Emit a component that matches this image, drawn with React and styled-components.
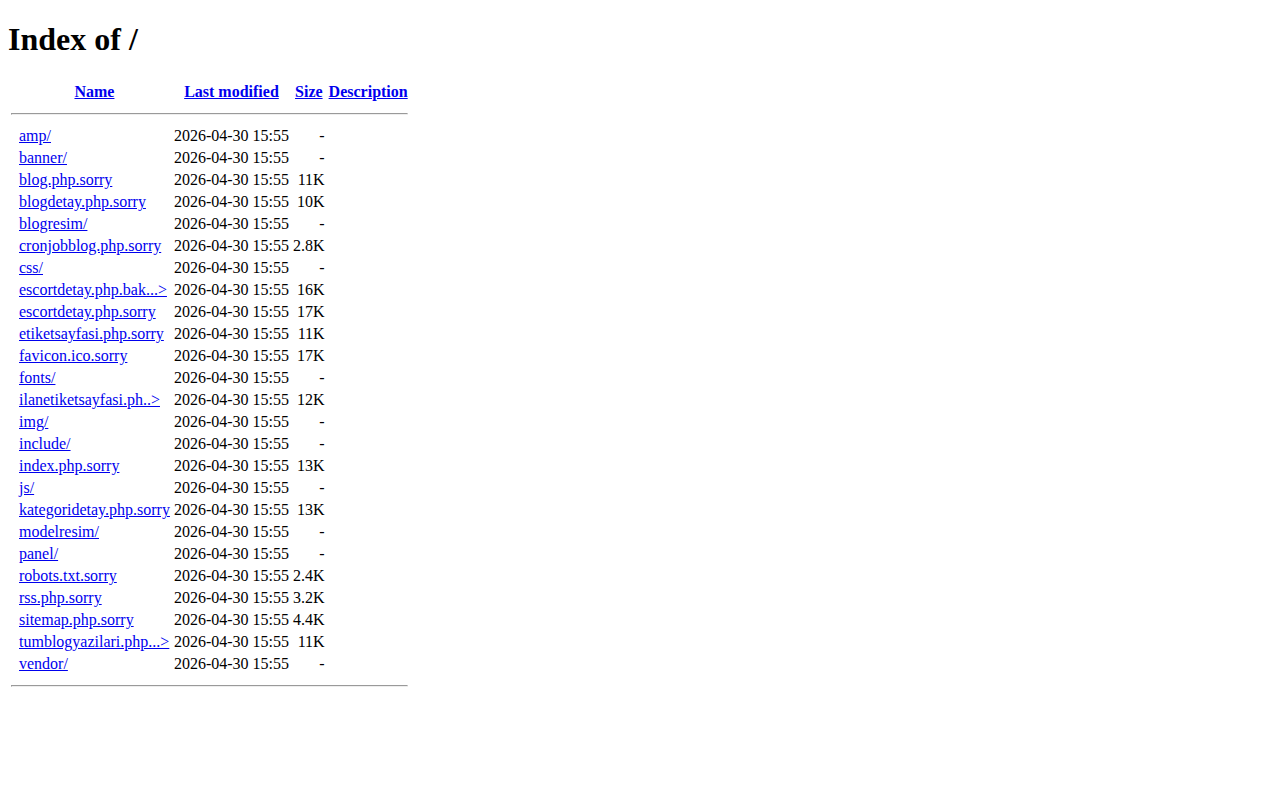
import React from "react";
import styled, { createGlobalStyle } from "styled-components";

const GlobalStyle = createGlobalStyle`
  body {
    margin: 0 8px 8px;
    background: #ffffff;
    color: #000000;
    font-family: "Liberation Serif", "Times New Roman", serif;
    font-size: 16px;
  }
`;

const Title = styled.h1`
  font-size: 2em;
  font-weight: bold;
  margin: 0.67em 0;
`;

const Listing = styled.table`
  border-collapse: separate;
  border-spacing: 2px;
`;

const HeadCell = styled.th`
  padding: 1px;
  font-weight: bold;
  text-align: center;
  vertical-align: ${(p) => (p.$top ? "top" : "middle")};
`;

const Cell = styled.td`
  padding: 1px;
  text-align: ${(p) => (p.$right ? "right" : "left")};
  vertical-align: ${(p) => (p.$top ? "top" : "middle")};
  white-space: nowrap;
`;

const FileLink = styled.a`
  color: #0000ee;
  text-decoration: underline;
  cursor: pointer;
`;

const Rule = styled.hr`
  margin: 8px 0;
  color: gray;
  border-style: inset;
  border-width: 1px;
  overflow: hidden;
`;

const DATE = "2026-04-30 15:55";

const files = [
  { name: "amp/", size: "-" },
  { name: "banner/", size: "-" },
  { name: "blog.php.sorry", size: "11K" },
  { name: "blogdetay.php.sorry", size: "10K" },
  { name: "blogresim/", size: "-" },
  { name: "cronjobblog.php.sorry", size: "2.8K" },
  { name: "css/", size: "-" },
  { name: "escortdetay.php.bak...>", size: "16K" },
  { name: "escortdetay.php.sorry", size: "17K" },
  { name: "etiketsayfasi.php.sorry", size: "11K" },
  { name: "favicon.ico.sorry", size: "17K" },
  { name: "fonts/", size: "-" },
  { name: "ilanetiketsayfasi.ph..>", size: "12K" },
  { name: "img/", size: "-" },
  { name: "include/", size: "-" },
  { name: "index.php.sorry", size: "13K" },
  { name: "js/", size: "-" },
  { name: "kategoridetay.php.sorry", size: "13K" },
  { name: "modelresim/", size: "-" },
  { name: "panel/", size: "-" },
  { name: "robots.txt.sorry", size: "2.4K" },
  { name: "rss.php.sorry", size: "3.2K" },
  { name: "sitemap.php.sorry", size: "4.4K" },
  { name: "tumblogyazilari.php...>", size: "11K" },
  { name: "vendor/", size: "-" },
];

export default function App() {
  return (
    <>
      <GlobalStyle />
      <Title>Index of /</Title>
      <Listing>
        <tbody>
          <tr>
            <HeadCell $top>&nbsp;</HeadCell>
            <HeadCell><FileLink>Name</FileLink></HeadCell>
            <HeadCell><FileLink>Last modified</FileLink></HeadCell>
            <HeadCell><FileLink>Size</FileLink></HeadCell>
            <HeadCell><FileLink>Description</FileLink></HeadCell>
          </tr>
          <tr>
            <HeadCell colSpan={5}><Rule /></HeadCell>
          </tr>
          {files.map((f) => (
            <tr key={f.name}>
              <Cell $top>&nbsp;</Cell>
              <Cell><FileLink>{f.name}</FileLink></Cell>
              <Cell $right>{DATE}</Cell>
              <Cell $right>{f.size}</Cell>
              <Cell>&nbsp;</Cell>
            </tr>
          ))}
          <tr>
            <HeadCell colSpan={5}><Rule /></HeadCell>
          </tr>
        </tbody>
      </Listing>
    </>
  );
}
